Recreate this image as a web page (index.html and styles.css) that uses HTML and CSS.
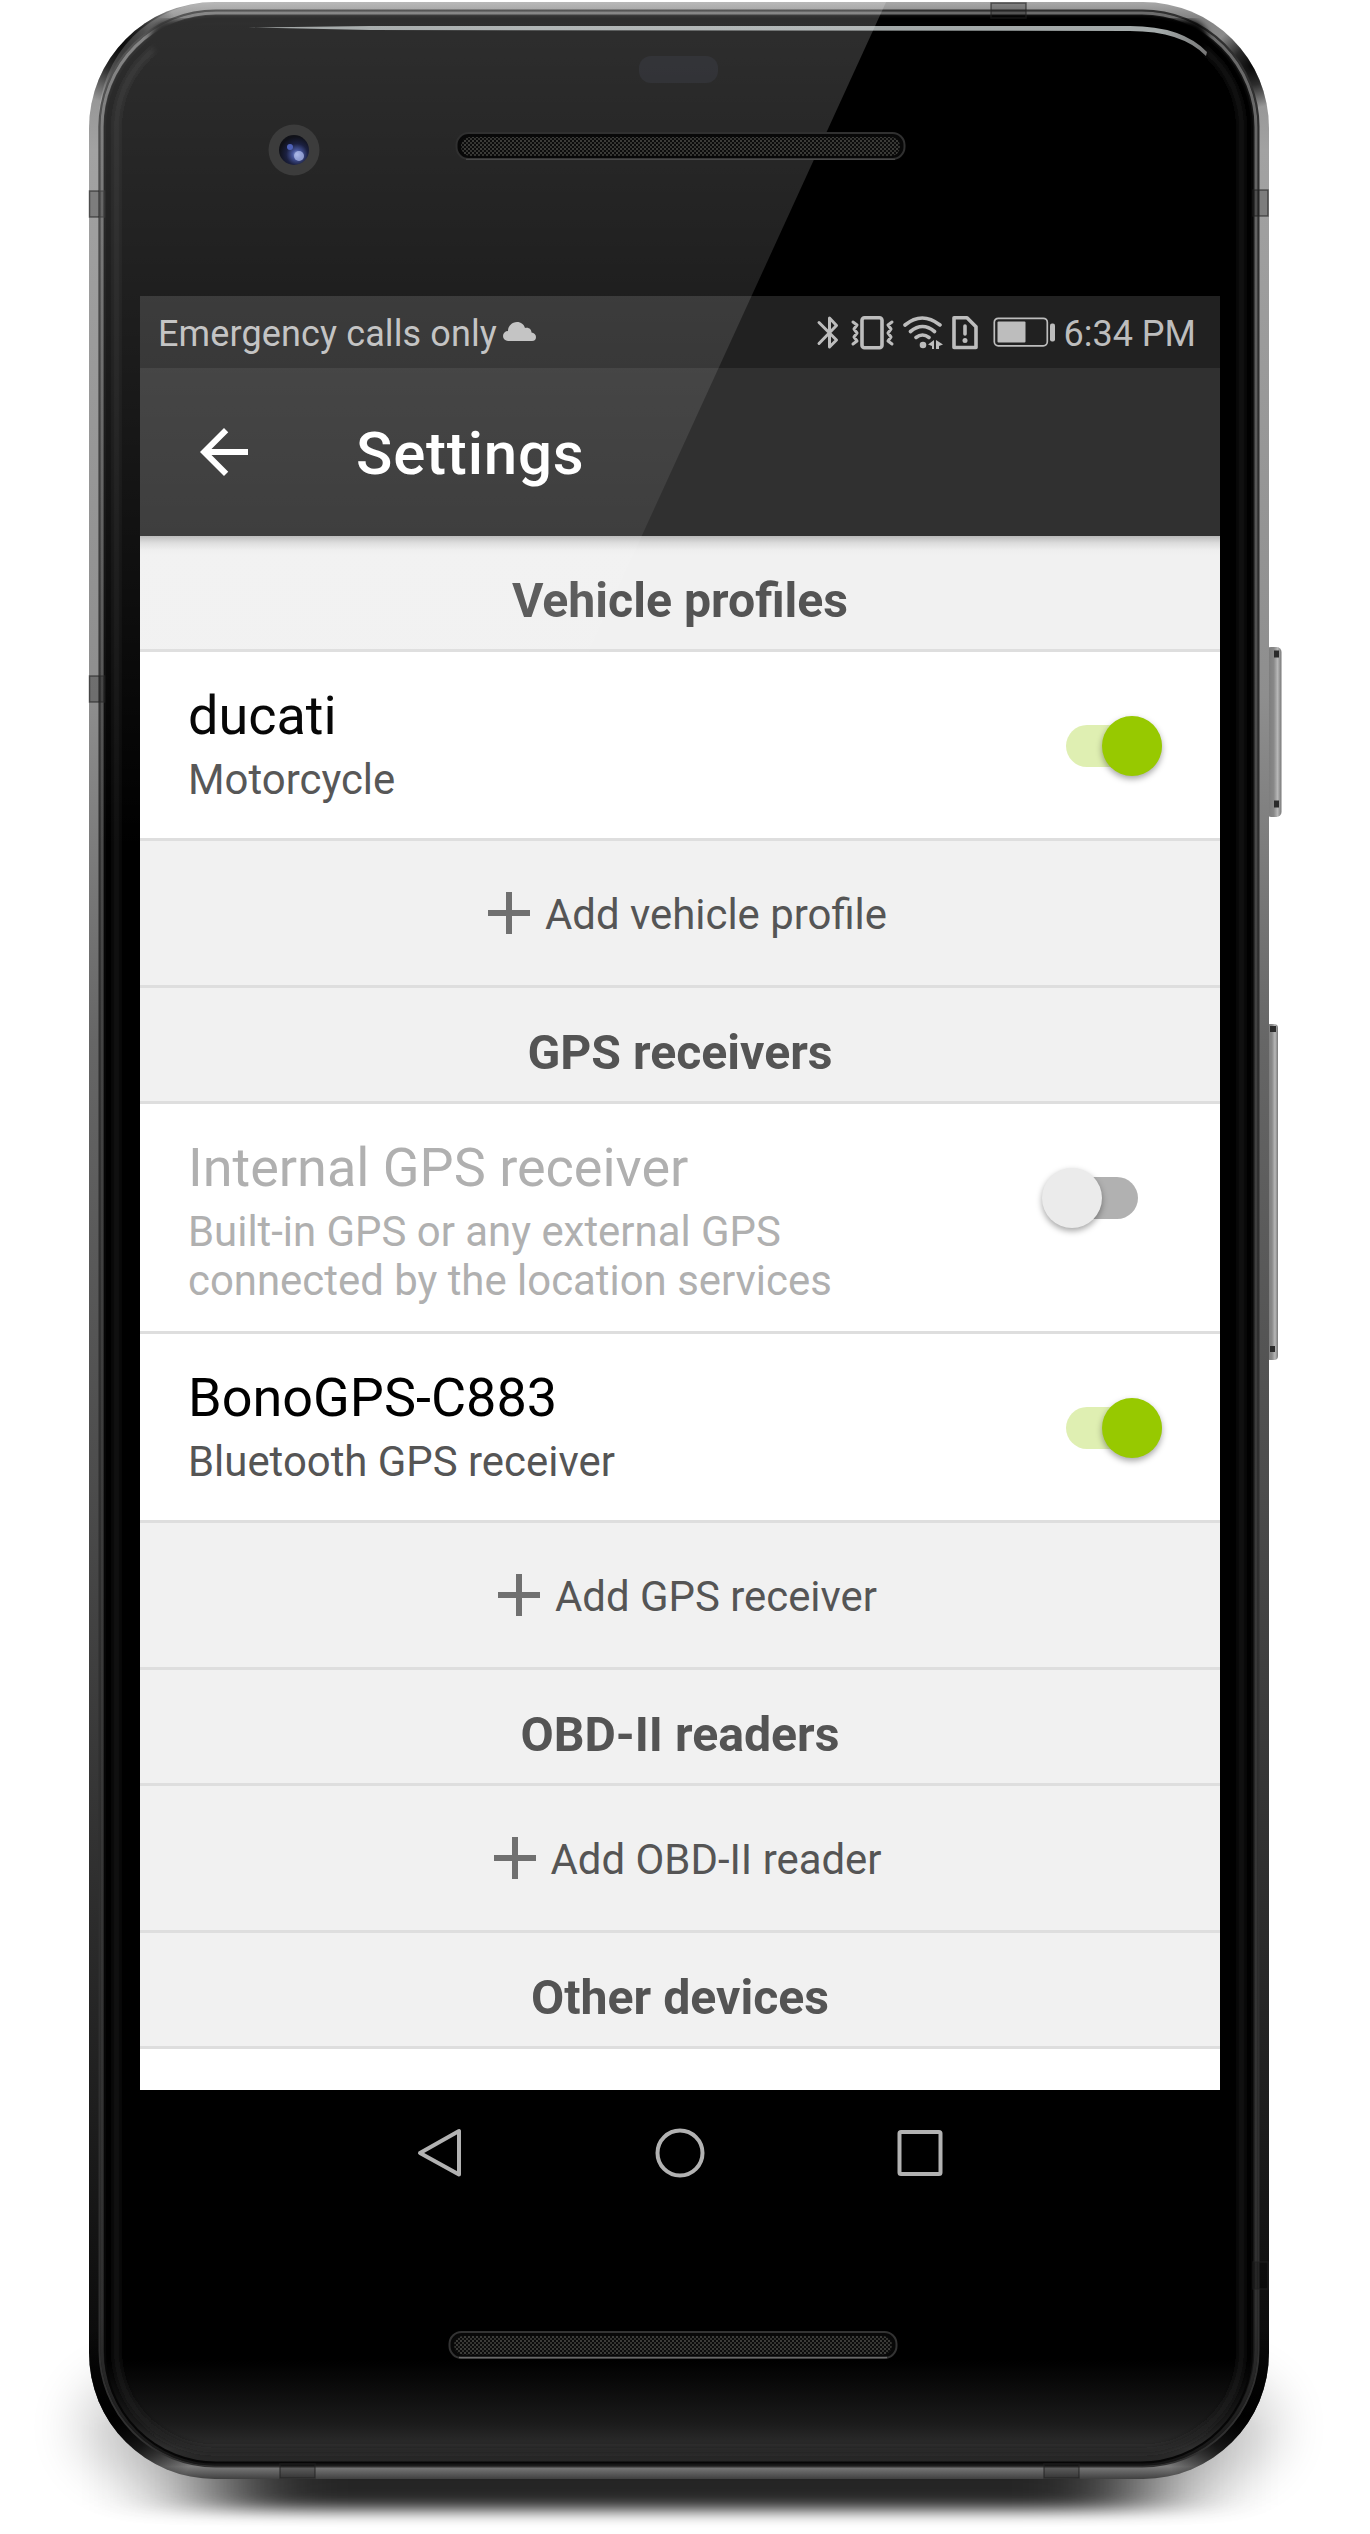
FILE: index.html
```html
<!DOCTYPE html>
<html lang="en">
<head>
<meta charset="utf-8">
<title>Settings</title>
<link rel="stylesheet" href="styles.css">
</head>
<body>
<svg width="0" height="0" class="defs" aria-hidden="true">
  <symbol id="plus" viewBox="0 0 24 24"><path d="M19 13h-6v6h-2v-6H5v-2h6V5h2v6h6z"/></symbol>
</svg>
<div class="device">
  <svg class="casing" viewBox="0 0 1370 2534" aria-hidden="true">
    <defs>
      <linearGradient id="rim" gradientUnits="userSpaceOnUse" x1="0" y1="2" x2="0" y2="2479">
        <stop offset="0" stop-color="#a8a8a8"/><stop offset=".006" stop-color="#858585"/><stop offset=".06" stop-color="#a2a2a2"/>
        <stop offset=".28" stop-color="#8e8e8e"/><stop offset=".42" stop-color="#666"/><stop offset=".6" stop-color="#4c4c4c"/>
        <stop offset=".85" stop-color="#1e1e1e"/><stop offset=".975" stop-color="#050505"/><stop offset=".988" stop-color="#505050"/><stop offset=".995" stop-color="#7c7c7c"/><stop offset="1" stop-color="#404040"/>
      </linearGradient>
      <linearGradient id="rim2" x1="0" y1="0" x2="0" y2="1">
        <stop offset="0" stop-color="#6c6c6c"/><stop offset=".4" stop-color="#444"/><stop offset=".94" stop-color="#303030"/><stop offset="1" stop-color="#161616"/>
      </linearGradient>
      <linearGradient id="glass" gradientUnits="userSpaceOnUse" x1="0" y1="2360" x2="0" y2="2464">
        <stop offset="0" stop-color="#000"/><stop offset=".6" stop-color="#1a1a1a"/><stop offset=".85" stop-color="#2e2e2e"/><stop offset="1" stop-color="#242424"/>
      </linearGradient>
      <linearGradient id="shine" x1="0" y1="0" x2="1" y2="0">
        <stop offset="0" stop-color="#8e9494"/><stop offset=".3" stop-color="#a0a6a6"/><stop offset=".95" stop-color="#a4aaaa"/><stop offset="1" stop-color="#777"/>
      </linearGradient>
      <linearGradient id="key" x1="0" y1="0" x2="1" y2="0">
        <stop offset="0" stop-color="#777"/><stop offset=".5" stop-color="#888"/><stop offset=".75" stop-color="#b8b8b8"/><stop offset="1" stop-color="#777"/>
      </linearGradient>
      <radialGradient id="dark"><stop offset="0" stop-color="#000" stop-opacity=".95"/><stop offset=".45" stop-color="#000" stop-opacity=".7"/><stop offset="1" stop-color="#000" stop-opacity="0"/></radialGradient>
      <radialGradient id="lens" cx=".6" cy=".65" r=".6"><stop offset="0" stop-color="#9aa9dc"/><stop offset=".25" stop-color="#46559a"/><stop offset=".6" stop-color="#1b2040"/><stop offset="1" stop-color="#101118"/></radialGradient>
      <pattern id="mesh" width="4" height="4" patternUnits="userSpaceOnUse"><rect width="4" height="4" fill="#0c0c0c"/><rect width="2" height="2" fill="#3c3c39"/><rect x="2" y="2" width="2" height="2" fill="#343431"/></pattern>
      <clipPath id="body"><rect x="89" y="2" width="1180" height="2477" rx="126"/></clipPath>
      <filter id="fall" x="-50%" y="-150%" width="200%" height="400%"><feGaussianBlur stdDeviation="58 8"/></filter>
      <filter id="halo" x="-20%" y="-80%" width="140%" height="260%"><feGaussianBlur stdDeviation="26 22"/></filter>
      <filter id="soft" x="-5%" y="-5%" width="110%" height="110%"><feGaussianBlur stdDeviation="3"/></filter>
    </defs>
    <rect x="80" y="2370" width="1198" height="114" rx="60" fill="#000" opacity=".17" filter="url(#halo)"/>
    <rect x="210" y="2420" width="940" height="90" fill="#000" opacity=".84" filter="url(#fall)"/>
    <g>
      <rect x="1266" y="647" width="15.500" height="170" rx="5" fill="url(#key)"/>
      <path d="M1274 654h5M1274 804h5" stroke="#2b2b2b" stroke-width="7"/>
      <rect x="1266" y="1024" width="12" height="336" rx="4" fill="url(#key)"/>
      <path d="M1270 1029h6M1270 1349h5" stroke="#2b2b2b" stroke-width="6"/>
    </g>
    <rect x="89" y="2" width="1180" height="2477" rx="126" fill="url(#rim)"/>
    <g clip-path="url(#body)">
      <circle cx="118" cy="42" r="62" fill="url(#dark)"/>
      <circle cx="1252" cy="66" r="42" fill="url(#dark)"/>
      <circle cx="110" cy="2420" r="92" fill="url(#dark)"/>
      <circle cx="1248" cy="2420" r="92" fill="url(#dark)"/>
    </g>
    <rect x="99.500" y="10.500" width="1159" height="2456" rx="116" fill="#161616" stroke="#303030" stroke-width="2"/>
    <rect x="102" y="13" width="1154" height="2451" rx="114" fill="none" stroke="url(#rim2)" stroke-width="3"/>
    <rect x="105" y="16.500" width="1147" height="2446" rx="111" fill="url(#glass)" stroke="#060606" stroke-width="2"/>
    <rect x="116.500" y="28" width="1125" height="2422" rx="99" fill="none" stroke="#222" stroke-width="4" filter="url(#soft)"/>
    <rect x="150" y="20" width="1058" height="40" rx="20" fill="#000" filter="url(#soft)"/>
    <g fill="#000" fill-opacity=".22" stroke="#222" stroke-opacity=".6" stroke-width="1.500">
      <path d="M89.500 191h15v26h-15zM1253 190h15v26h-15zM89.500 676h15v26h-15zM991 3h35v15h-35zM1253 2262h15v27h-15zM280 2464h35v14h-35zM1044 2464h35v14h-35z"/>
    </g>
    <rect x="639" y="56" width="79" height="27" rx="12" fill="#090a0f"/>
    <path d="M248 27.500 370 26H1130q52 0 77 26l-1 4q-24-25-76-25L370 30z" fill="url(#shine)"/>
    <g>
      <rect x="449.500" y="2332" width="447" height="26" rx="12" fill="#080808" stroke="#333" stroke-width="2"/>
      <rect x="454" y="2336" width="438" height="18.500" rx="9" fill="url(#mesh)"/>
      <path d="M459 2357.500h428" stroke="#696969" stroke-width="1.500"/>
    </g>
  </svg>

  <main class="screen">
    <div class="status">
      <span>Emergency calls only</span>
      <svg class="cloud" viewBox="0 0 33 19"><path d="M5 19a5 5 0 0 1 0-10C5 4 9 0 14 0c4 0 7 2.500 8 6 4-1 6.500 1.500 6.500 4.500C31 11 33 12.500 33 15a4 4 0 0 1-4 4z"/></svg>
      <svg class="tray" viewBox="0 0 240 36">
        <g fill="none" stroke="#bdbdbd" stroke-linecap="round" stroke-linejoin="round">
          <path d="M3 7.500 20.500 25 13.500 32V3l7 7.500L3 28.500" stroke-width="3"/>
          <rect x="46" y="2.700" width="20" height="30" rx="2.500" stroke-width="3.600"/>
          <path d="M37 7l4 3-3 4 3 4-3 4 3 4-4 3M76 7l-4 3 3 4-3 4 3 4-3 4 4 3" stroke-width="3"/>
          <path d="M89 10q17-14 35 0M94.500 16.500q12-10 24 0M100 22.500q6.500-5 13 0" stroke-width="3.600"/>
          <path d="M138 2.700h13l9 9V32.500H138z" stroke-width="3.600"/>
          <path d="M149 11v8" stroke-width="3.600"/>
          <rect x="178.300" y="3.300" width="53" height="27.500" rx="4" stroke-width="1.700"/>
        </g>
        <g fill="#bdbdbd">
          <circle cx="107" cy="30" r="3.300"/><circle cx="149" cy="25.500" r="2.500"/>
          <path d="M118 25v9h-2v-3l-4-1.500zM120 25l7 4.500-4 1.500v3h-3z"/>
          <rect x="181.500" y="6.500" width="28" height="21" rx="1"/><rect x="234" y="8.500" width="5" height="18" rx="2"/>
        </g>
      </svg>
      <span class="clock">6:34 PM</span>
    </div>
    <header class="appbar">
      <svg class="back" viewBox="0 0 24 24"><path d="M20 11H7.830l5.590-5.590L12 4l-8 8 8 8 1.410-1.410L7.830 13H20z"/></svg>
      <h1>Settings</h1>
    </header>
    <div class="list">
      <h2 class="section">Vehicle profiles</h2>
      <div class="item">
        <div class="label"><div class="name">ducati</div><div class="note">Motorcycle</div></div>
        <div class="switch on"><i class="thumb"></i></div>
      </div>
      <div class="add"><svg><use href="#plus"/></svg><span>Add vehicle profile</span></div>
      <h2 class="section">GPS receivers</h2>
      <div class="item disabled">
        <div class="label"><div class="name">Internal GPS receiver</div><div class="note">Built-in GPS or any external GPS<br>connected by the location services</div></div>
        <div class="switch off"><i class="thumb"></i></div>
      </div>
      <div class="item">
        <div class="label"><div class="name">BonoGPS-C883</div><div class="note">Bluetooth GPS receiver</div></div>
        <div class="switch on"><i class="thumb"></i></div>
      </div>
      <div class="add"><svg><use href="#plus"/></svg><span>Add GPS receiver</span></div>
      <h2 class="section">OBD-II readers</h2>
      <div class="add"><svg><use href="#plus"/></svg><span>Add OBD-II reader</span></div>
      <h2 class="section">Other devices</h2>
    </div>
  </main>
  <nav class="keys">
    <svg viewBox="0 0 52 52"><path d="M45 4v43.500L6 26z"/></svg>
    <svg viewBox="0 0 52 52"><circle cx="26" cy="26" r="22.500"/></svg>
    <svg viewBox="0 0 52 52"><rect x="5.500" y="5" width="41" height="42" rx="1.500"/></svg>
  </nav>

  <svg class="glare" viewBox="0 0 1370 2534" aria-hidden="true">
    <defs>
      <linearGradient id="fade" gradientUnits="userSpaceOnUse" x1="0" y1="0" x2="0" y2="850"><stop offset="0" stop-color="#fff" stop-opacity=".185"/><stop offset="1" stop-color="#fff" stop-opacity="0"/></linearGradient>
      <clipPath id="face"><rect x="99" y="2" width="1161" height="2468" rx="117"/></clipPath>
    </defs>
    <path d="M0 0H887L498 850H0z" fill="url(#fade)" clip-path="url(#face)"/>
    <circle cx="294" cy="150" r="25.500" fill="#3c3c3c"/>
    <circle cx="294" cy="150" r="15" fill="url(#lens)"/>
    <circle cx="290" cy="147" r="3" fill="#4f62b8"/>
    <circle cx="299" cy="156" r="5" fill="#b4c0ee" opacity=".7"/>
    <rect x="456.500" y="133" width="448" height="26" rx="12" fill="#080808" stroke="#303030" stroke-width="2"/>
    <rect x="461" y="137" width="439" height="19" rx="9" fill="url(#mesh)"/>
    <path d="M466 159.300h429" stroke="#505050"/>
  </svg>
</div>
</body>
</html>
```
FILE: styles.css
```css
* { box-sizing: border-box; }
body { margin: 0; background: #fff; font-family: Roboto, "Liberation Sans", sans-serif; }
h1, h2 { margin: 0; }
svg { display: block; flex: none; }
.defs { position: absolute; }

.device {
  position: relative;
  width: 1370px;
  height: 2534px;
  padding: 296px 150px 0 140px;
  overflow: hidden;
}
.casing, .glare { position: absolute; left: 0; top: 0; width: 1370px; height: 2534px; }
.glare { pointer-events: none; }

.screen {
  position: relative;
  width: 1080px;
  height: 1794px;
  background: #fff;
  overflow: hidden;
}

.status {
  display: flex;
  align-items: center;
  height: 72px;
  padding: 4px 24px 0 18px;
  background: #212121;
  color: #bdbdbd;
  font-size: 36px;
  letter-spacing: .12px;
  white-space: nowrap;
}
.cloud { width: 33px; height: 19px; margin: 0 0 6px 6px; fill: #bdbdbd; }
.tray { width: 240px; height: 36px; margin: 0 8px 2px auto; }
.clock { letter-spacing: 0; }

.appbar {
  display: flex;
  align-items: center;
  height: 168px;
  padding-left: 48px;
  background: #303030;
  color: #fff;
}
.back { width: 72px; height: 72px; fill: #fff; }
.appbar h1 { margin: 4px 0 0 96px; font-size: 60px; font-weight: 500; letter-spacing: .8px; line-height: 70px; }

.section {
  height: 116px;
  padding-top: 37px;
  border-bottom: 3px solid #dedede;
  background: #f1f1f1;
  color: #545454;
  font-size: 48.200px;
  font-weight: 700;
  line-height: 56px;
  text-align: center;
}
.section:first-child { background: linear-gradient(#b8b8b8, #dcdcdc 7px, #eee 14px, #f1f1f1 20px); }

.item {
  display: flex;
  justify-content: space-between;
  align-items: flex-start;
  min-height: 189px;
  padding: 32px 58px 26px 48px;
  border-bottom: 3px solid #dedede;
  background: #fff;
}
.name { color: #000; font-size: 54px; line-height: 63px; }
.note { margin-top: 8px; color: #555; font-size: 41.900px; line-height: 49px; }
.disabled .name, .disabled .note { color: #b0b0b0; }

.switch {
  display: flex;
  width: 96px;
  height: 42px;
  margin-top: 41px;
  align-items: center;
  border-radius: 21px;
}
.on { justify-content: flex-end; background: #dfefb2; }
.off { margin-right: 24px; background: linear-gradient(90deg, transparent 30px, #b1b1b1 30px); }
.thumb {
  width: 60px;
  height: 60px;
  flex: none;
  margin-top: -1px;
  border-radius: 50%;
  background: #97c900;
  box-shadow: 0 3px 6px rgba(0, 0, 0, .35);
}
.off .thumb { background: #ebebeb; }

.add {
  display: flex;
  align-items: center;
  justify-content: center;
  height: 147px;
  border-bottom: 3px solid #dedede;
  background: #f1f1f1;
  color: #555;
  font-size: 41.900px;
}
.add svg { width: 72px; height: 72px; fill: #707070; }
.add span { padding-top: 3px; line-height: 49px; }

.keys {
  position: relative;
  display: flex;
  justify-content: space-between;
  width: 1080px;
  padding: 37px 274px;
}
.keys svg { width: 52px; height: 52px; fill: none; stroke: #b2b2b2; stroke-width: 4; stroke-linejoin: round; }
```
